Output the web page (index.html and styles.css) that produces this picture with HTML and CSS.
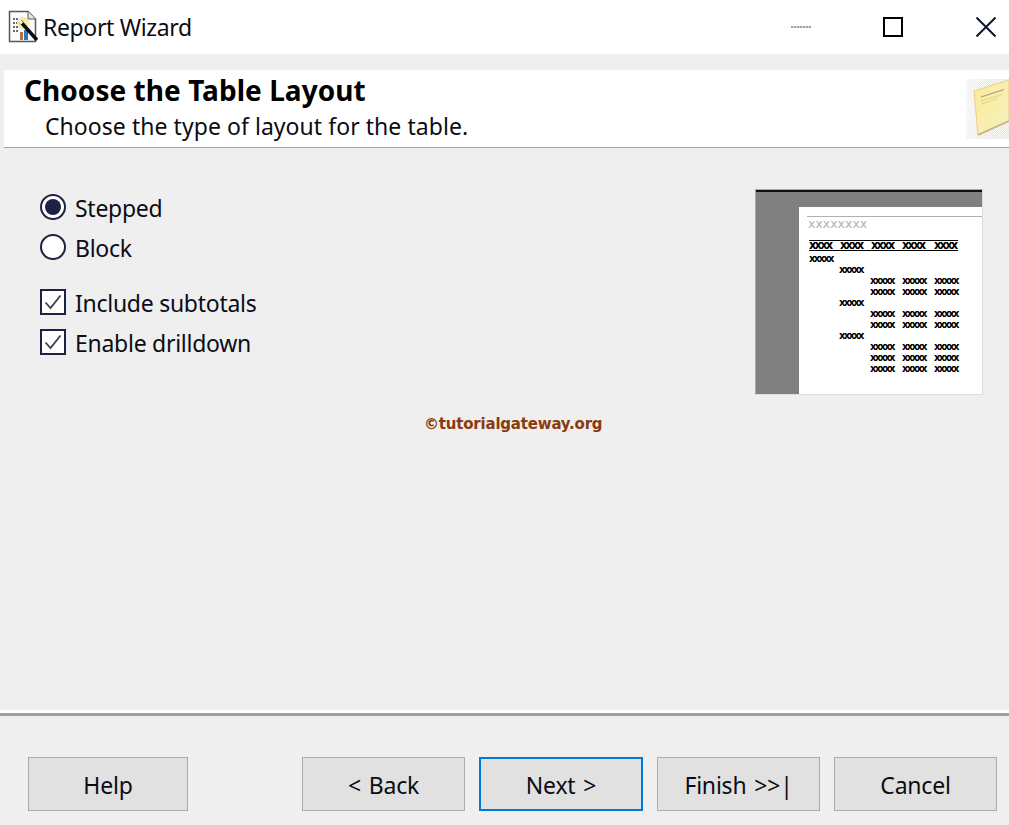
FILE: index.html
```html
<!DOCTYPE html>
<html lang="en">
<head>
<meta charset="utf-8">
<title>Report Wizard</title>
<link rel="stylesheet" href="styles.css">
</head>
<body>
<div class="window">
  <header class="titlebar">
    <svg class="app-icon" width="30" height="33" viewBox="0 0 30 33">
      <path d="M1.5 1.5H20L27.500 9V31.500H1.500Z" fill="#fbfbfb" stroke="#55585f" stroke-width="1.500"/>
      <path d="M20 1.500V9H27.500" fill="#e4e4e4" stroke="#55585f" stroke-width="1"/>
      <path d="M5 9h6M5 13h5M5 17h5M5 21h5" stroke="#3a3a3a" stroke-width="1.500" stroke-dasharray="2 1"/>
      <circle cx="15" cy="13" r="6" fill="#f1eb9c"/>
      <path d="M12 22h3v8h-3z" fill="#b5703a"/>
      <path d="M16 20h4v10h-4z" fill="#2a78c4"/>
      <path d="M12 11L29 30" stroke="#0c0c0c" stroke-width="3.500"/>
      <path d="M11 10L14 13.500" stroke="#f4f4f4" stroke-width="3"/>
    </svg>
    <span class="app-title">Report Wizard</span>
    <div class="window-controls">
      <span class="ctl-min"></span>
      <span class="ctl-max"></span>
      <svg class="ctl-close" width="20" height="20" viewBox="0 0 20 20">
        <path d="M0.500 0.500L19.500 19.500M19.500 0.500L0.500 19.500" stroke="#10142c" stroke-width="2"/>
      </svg>
    </div>
  </header>

  <section class="banner">
    <div class="banner-text">
      <h1>Choose the Table Layout</h1>
      <p>Choose the type of layout for the table.</p>
    </div>
    <svg class="banner-icon" width="43" height="60" viewBox="0 0 43 60">
      <defs>
        <pattern id="dither" width="2" height="2" patternUnits="userSpaceOnUse">
          <rect width="2" height="2" fill="#f9f9f7"/>
          <rect width="1" height="1" fill="#e0e0dc"/>
          <rect x="1" y="1" width="1" height="1" fill="#e8e8e4"/>
        </pattern>
        <linearGradient id="veil" x1="0" y1="0" x2="1" y2="0">
          <stop offset="0" stop-color="#fff" stop-opacity="0.500"/>
          <stop offset="0.500" stop-color="#fff" stop-opacity="0.100"/>
          <stop offset="1" stop-color="#fff" stop-opacity="0"/>
        </linearGradient>
        <linearGradient id="sheet" x1="0" y1="0" x2="1" y2="1">
          <stop offset="0" stop-color="#fbeb98"/>
          <stop offset="1" stop-color="#f6f0c0"/>
        </linearGradient>
      </defs>
      <rect width="43" height="60" fill="url(#dither)"/>
      <rect width="43" height="60" fill="url(#veil)"/>
      <path d="M8 12L43 1V42L12 56Z" fill="url(#sheet)" stroke="#eccd88" stroke-width="1"/>
      <path d="M15 18L38 10.500" stroke="#a59c86" stroke-width="1.200"/>
      <path d="M15 22L36 15.500M15 25L32 19.500" stroke="#e4d48c" stroke-width="1"/>
      <path d="M12 56L43 42" stroke="#c4ad80" stroke-width="1.500"/>
    </svg>
  </section>

  <main class="content">
    <div class="choices">
      <form class="options">
        <div class="option-group">
          <label class="option"><span class="radio radio-on"></span><span class="option-text">Stepped</span></label>
          <label class="option"><span class="radio"></span><span class="option-text">Block</span></label>
        </div>
        <div class="option-group">
          <label class="option">
            <span class="check"><svg width="22" height="22" viewBox="0 0 22 22"><path d="M3.500 11.500L8.500 17L18.500 4.500" fill="none" stroke="#3c4050" stroke-width="1.800"/></svg></span><span class="option-text">Include subtotals</span>
          </label>
          <label class="option">
            <span class="check"><svg width="22" height="22" viewBox="0 0 22 22"><path d="M3.500 11.500L8.500 17L18.500 4.500" fill="none" stroke="#3c4050" stroke-width="1.800"/></svg></span><span class="option-text">Enable drilldown</span>
          </label>
        </div>
      </form>

      <div class="preview">
        <div class="desk">
          <div class="page">
            <div class="page-title">xxxxxxxx</div>
            <div class="sample-head"><b>xxxx</b><b>xxxx</b><b>xxxx</b><b>xxxx</b><b>xxxx</b></div>
            <div class="sample-row"><span>xxxxx</span></div>
            <div class="sample-row"><i></i><span>xxxxx</span></div>
            <div class="sample-row"><i></i><i></i><span>xxxxx</span><span>xxxxx</span><span>xxxxx</span></div>
            <div class="sample-row"><i></i><i></i><span>xxxxx</span><span>xxxxx</span><span>xxxxx</span></div>
            <div class="sample-row"><i></i><span>xxxxx</span></div>
            <div class="sample-row"><i></i><i></i><span>xxxxx</span><span>xxxxx</span><span>xxxxx</span></div>
            <div class="sample-row"><i></i><i></i><span>xxxxx</span><span>xxxxx</span><span>xxxxx</span></div>
            <div class="sample-row"><i></i><span>xxxxx</span></div>
            <div class="sample-row"><i></i><i></i><span>xxxxx</span><span>xxxxx</span><span>xxxxx</span></div>
            <div class="sample-row"><i></i><i></i><span>xxxxx</span><span>xxxxx</span><span>xxxxx</span></div>
            <div class="sample-row sample-row-tight"><i></i><i></i><span>xxxxx</span><span>xxxxx</span><span>xxxxx</span></div>
          </div>
        </div>
      </div>
    </div>
    <div class="watermark">©tutorialgateway.org</div>
  </main>

  <footer class="footer">
    <button class="btn btn-help" type="button">Help</button>
    <button class="btn" type="button">&lt; Back</button>
    <button class="btn btn-default" type="button">Next &gt;</button>
    <button class="btn" type="button">Finish &gt;&gt;|</button>
    <button class="btn" type="button">Cancel</button>
  </footer>
</div>
</body>
</html>
```

FILE: styles.css
```css
* {
  box-sizing: border-box;
}

html,
body {
  margin: 0;
  height: 100%;
  overflow: hidden;
}

body {
  background: #efefef;
  color: #0c0c14;
  font-family: "Noto Sans", "Open Sans", sans-serif;
}

.window {
  display: flex;
  flex-direction: column;
  height: 825px;
}

/* Title bar */
.titlebar {
  display: flex;
  align-items: center;
  height: 54px;
  flex: none;
  padding-left: 8px;
  background: #fff;
}

.app-icon {
  flex: none;
  margin-top: -1px;
}

.app-title {
  margin-left: 5px;
  font-size: 23px;
  letter-spacing: -0.35px;
}

.window-controls {
  display: flex;
  align-items: center;
  margin-left: auto;
  padding-right: 13px;
}

.ctl-min {
  width: 20px;
  height: 2px;
  margin-right: 72px;
  background: repeating-linear-gradient(90deg, #a9a593 0 2px, #d8d6cb 2px 3px);
}

.ctl-max {
  width: 20px;
  height: 20px;
  margin-right: 73px;
  border: 2px solid #000;
}

.ctl-close {
  display: block;
}

/* Banner */
.banner {
  display: flex;
  flex: none;
  height: 78px;
  margin: 16px 0 0 4px;
  background: #fff;
  border-bottom: 1px solid #a3a3a3;
}

.banner-text {
  padding: 2px 0 0 20px;
}

.banner-text h1 {
  margin: 0;
  font-size: 28px;
  line-height: 36px;
  font-weight: 700;
  letter-spacing: 0.05px;
  color: #000;
}

.banner-text p {
  margin: 0 0 0 21px;
  font-size: 23px;
  line-height: 36px;
  letter-spacing: 0.05px;
}

.banner-icon {
  flex: none;
  margin: 9px 0 0 auto;
}

/* Content */
.content {
  flex: 1;
  padding: 0 26px 0 40px;
}

.choices {
  display: flex;
  justify-content: space-between;
  align-items: flex-start;
}

.options {
  display: flex;
  flex-direction: column;
  gap: 29px;
  padding-top: 46px;
}

.option-group {
  display: flex;
  flex-direction: column;
  gap: 14px;
}

.option {
  display: flex;
  align-items: center;
  gap: 9px;
  height: 26px;
  font-size: 23px;
  letter-spacing: -0.27px;
  line-height: 26px;
}

.option-text {
  margin-top: 2px;
}

.radio,
.check {
  display: flex;
  flex: none;
  align-items: center;
  justify-content: center;
  width: 26px;
  height: 26px;
  border: 2px solid #1d2144;
  background: #fff;
}

.radio {
  border-radius: 50%;
}

.radio-on::after {
  content: "";
  width: 16px;
  height: 16px;
  border-radius: 50%;
  background: #1d2144;
}

.check svg {
  display: block;
}

/* Layout preview */
.preview {
  width: 228px;
  height: 206px;
  margin-top: 41px;
  border: 1px solid #a8a8a8;
  border-right-color: #dcdcdc;
  border-bottom-color: #dcdcdc;
  flex: none;
}

.desk {
  height: 100%;
  padding: 15px 0 0 43px;
  border-top: 2px solid #111;
  background: #808080;
}

.page {
  height: 100%;
  padding: 9px 0 0 10px;
  background: #fff;
  font-family: "DejaVu Sans", sans-serif;
  font-size: 10px;
  font-weight: 700;
  line-height: 11px;
  letter-spacing: -1.700px;
  color: #000;
}

.page-title {
  height: 24px;
  margin-left: -2px;
  padding-left: 1px;
  border-top: 1px solid #b0b0b0;
  padding-top: 1px;
  font-size: 12.500px;
  font-weight: 400;
  letter-spacing: 0;
  color: #b5b2aa;
}

.sample-head {
  display: grid;
  grid-template-columns: 31px 31px 31px 32px 24px;
  width: 149px;
  height: 11px;
  margin-bottom: 2px;
  border-top: 1px solid #000;
  border-bottom: 1px solid #000;
  font-size: 11.500px;
  letter-spacing: -1.800px;
  line-height: 8px;
}

.sample-row {
  display: grid;
  grid-template-columns: 30px 31px 32px 32px 24px;
  height: 11px;
}

.sample-row-tight {
  height: 10px;
}

/* Watermark */
.watermark {
  margin: 19px 0 0 384px;
  font-family: "DejaVu Sans", sans-serif;
  font-size: 15px;
  font-weight: 700;
  line-height: 20px;
  letter-spacing: -0.2px;
  color: #8b3a0c;
}

/* Footer */
.footer {
  display: flex;
  flex: none;
  gap: 14px;
  height: 112px;
  padding: 41px 12px 0 28px;
  border-top: 3px solid #a0a0a0;
  box-shadow: 0 -3px 0 #fff;
}

.btn {
  width: 163px;
  height: 54px;
  padding: 2px 0 0;
  border: 1px solid #adadad;
  background: #e1e1e1;
  color: #0c0c14;
  font-family: inherit;
  font-size: 23px;
  letter-spacing: -0.2px;
  word-spacing: 2px;
}

.btn-help {
  width: 160px;
  margin-right: 100px;
}

.btn-default {
  width: 164px;
  border: 2px solid #0078d7;
}
```
